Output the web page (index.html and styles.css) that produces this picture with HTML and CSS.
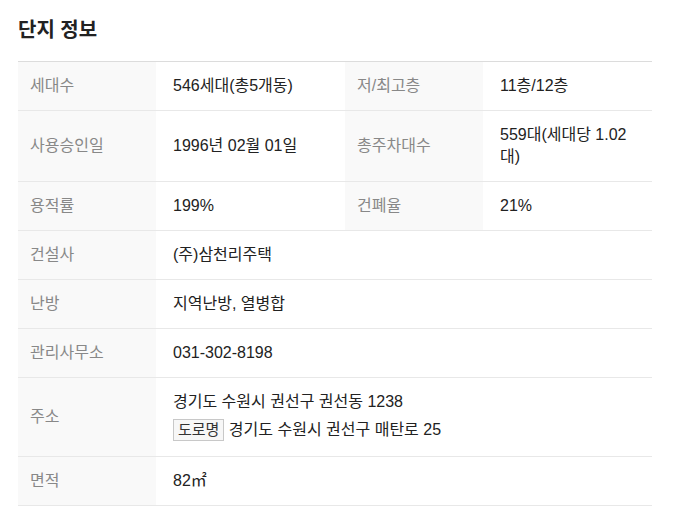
FILE: index.html
```html
<!DOCTYPE html>
<html lang="ko">
<head>
<meta charset="utf-8">
<link rel="stylesheet" href="styles.css">
</head>
<body>
<section class="complex">
  <h2 class="title">단지 정보</h2>
  <table class="info">
    <colgroup>
      <col class="c-label"><col class="c-value"><col class="c-label"><col class="c-value2">
    </colgroup>
    <tbody>
      <tr><th>세대수</th><td>546세대(총5개동)</td><th>저/최고층</th><td>11층/12층</td></tr>
      <tr><th>사용승인일</th><td>1996년 02월 01일</td><th>총주차대수</th><td>559대(세대당 1.02대)</td></tr>
      <tr><th>용적률</th><td>199%</td><th>건폐율</th><td>21%</td></tr>
      <tr><th>건설사</th><td colspan="3">(주)삼천리주택</td></tr>
      <tr><th>난방</th><td colspan="3">지역난방, 열병합</td></tr>
      <tr><th>관리사무소</th><td colspan="3">031-302-8198</td></tr>
      <tr class="addr"><th>주소</th><td colspan="3">
        <div class="line">경기도 수원시 권선구 권선동 1238</div>
        <div class="line"><span class="badge">도로명</span> 경기도 수원시 권선구 매탄로 25</div>
      </td></tr>
      <tr><th>면적</th><td colspan="3">82㎡</td></tr>
    </tbody>
  </table>
</section>
</body>
</html>
```

FILE: styles.css
```css
html, body { margin: 0; padding: 0; background: #fff; }
body {
  font-family: "Liberation Sans", "Noto Sans CJK KR", sans-serif;
  color: #222;
}
.complex { padding: 0 21px 0 18px; }
.title {
  margin: 0;
  padding-top: 17px;
  height: 61px;
  box-sizing: border-box;
  font-size: 20px;
  font-weight: bold;
  line-height: 26px;
  color: #222;
}
.info {
  width: 634px;
  border-collapse: collapse;
  table-layout: fixed;
  border-top: 1px solid #dcdcdc;
  font-size: 16px;
  line-height: 22px;
}
.c-label { width: 138px; }
.c-value { width: 189px; }
.c-value2 { width: 169px; }
.info th, .info td {
  border-bottom: 1px solid #e8e8e8;
  vertical-align: middle;
  text-align: left;
  height: 48px;
  box-sizing: border-box;
  padding: 13px 16px 13px 17px;
}
.info th {
  background: #f9f9f9;
  color: #888;
  font-weight: normal;
  padding-left: 12px;
}
.info td { color: #222; }
.addr td { padding-top: 13px; padding-bottom: 15px; }
.addr .line { line-height: 22px; }
.addr .line + .line { margin-top: 6px; }
.badge {
  display: inline-block;
  border: 1px solid #c8c8c8;
  background: #f7f7f7;
  color: #333;
  font-size: 15px;
  line-height: 20px;
  padding: 0 4px;
}
```
